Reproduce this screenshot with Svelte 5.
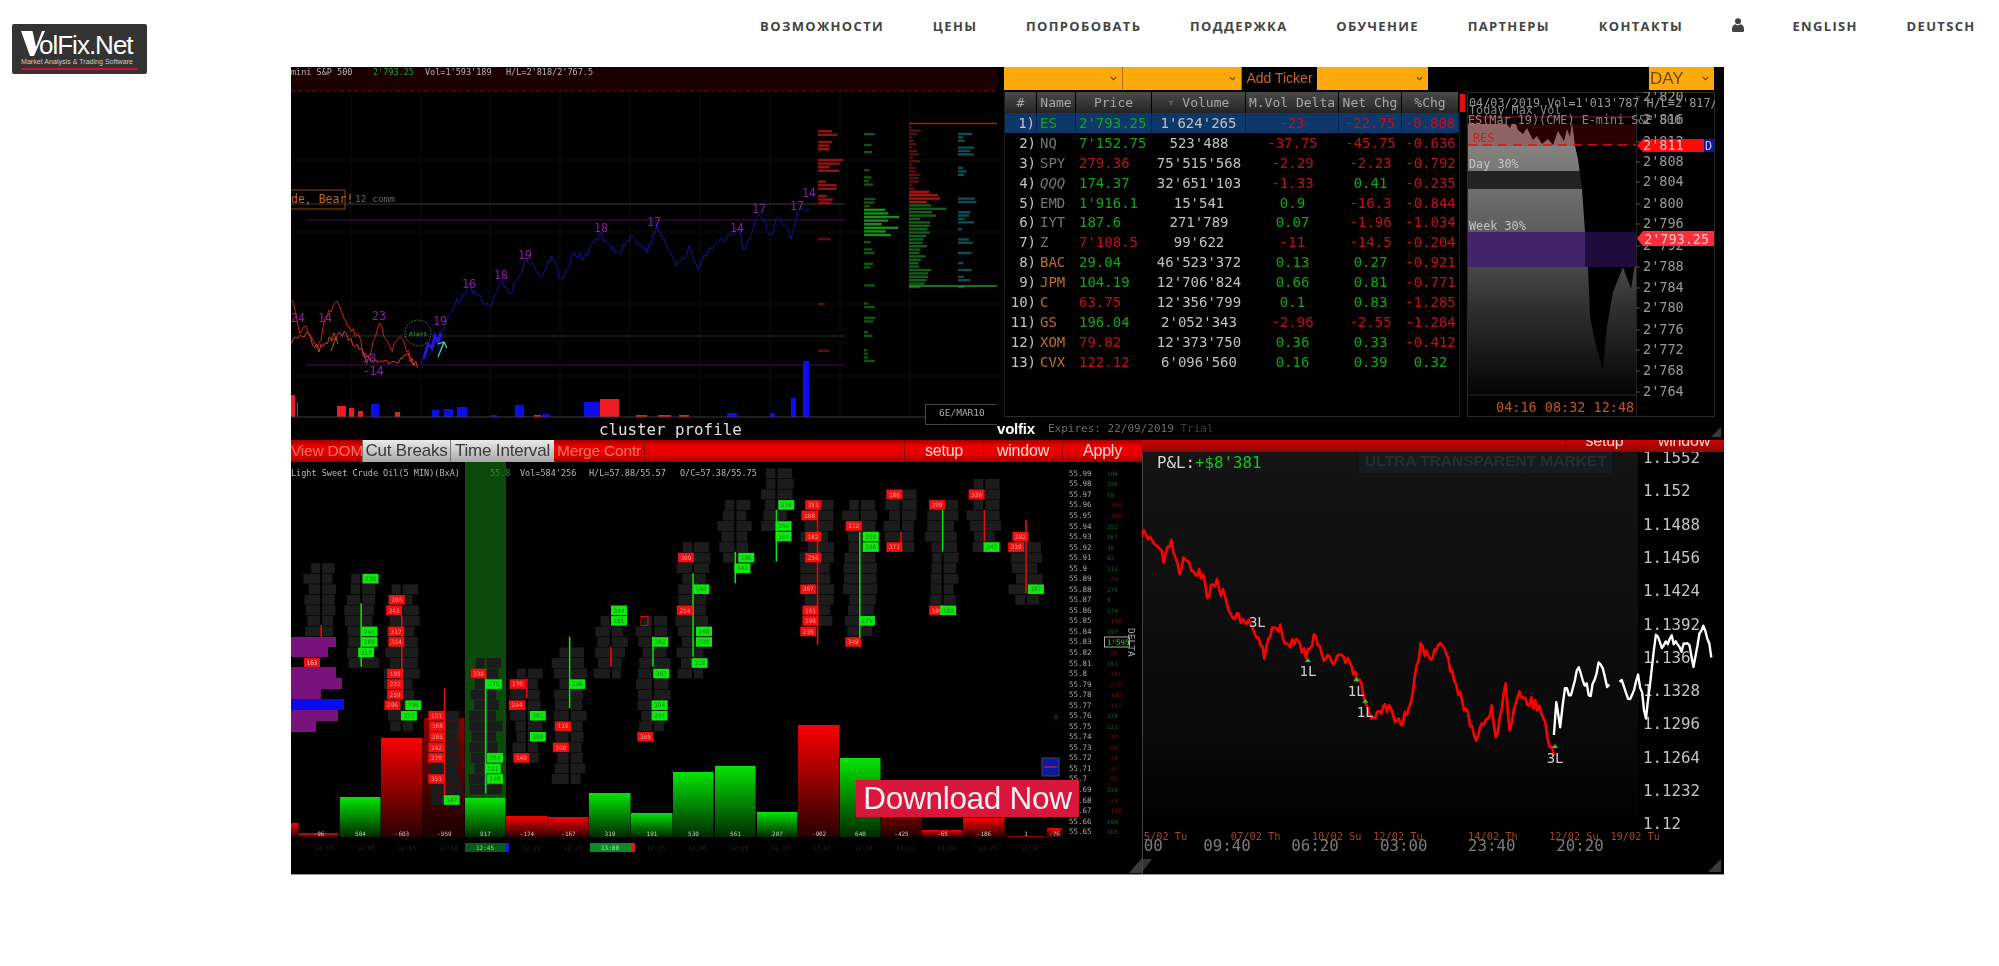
<script lang="ts">
  const navLinks = ["ВОЗМОЖНОСТИ", "ЦЕНЫ", "ПОПРОБОВАТЬ", "ПОДДЕРЖКА", "ОБУЧЕНИЕ", "ПАРТНЕРЫ", "КОНТАКТЫ"];

  // small seeded generator so the noisy chart parts stay the same on every load
  function seeded(seed: number) {
    let s = seed;
    return () => {
      s = (s * 16807) % 2147483647;
      return (s - 1) / 2147483646;
    };
  }

  function noisy(points: number[][], seed: number, amp: number) {
    const rnd = seeded(seed);
    let d = "";
    points.forEach((p, i) => {
      if (i === 0) {
        d += `M${p[0].toFixed(1)} ${p[1].toFixed(1)}`;
        return;
      }
      const prev = points[i - 1];
      const steps = Math.max(1, Math.round(Math.abs(p[0] - prev[0]) / 2));
      for (let k = 1; k <= steps; k++) {
        const t = k / steps;
        const x = prev[0] + (p[0] - prev[0]) * t;
        const y = prev[1] + (p[1] - prev[1]) * t + (rnd() - 0.5) * amp;
        d += `L${x.toFixed(1)} ${y.toFixed(1)}`;
      }
    });
    return d;
  }

  /* ---------- watchlist ---------- */
  const G = "g", R = "r", W = "w", O = "o", N = "n";
  const rows = [
    ["1)", "ES", G, "2'793.25", G, "1'624'265", "-23", R, "-22.75", R, "-0.808", R],
    ["2)", "NQ", N, "7'152.75", G, "523'488", "-37.75", R, "-45.75", R, "-0.636", R],
    ["3)", "SPY", N, "279.36", R, "75'515'568", "-2.29", R, "-2.23", R, "-0.792", R],
    ["4)", "QQQ", N, "174.37", G, "32'651'103", "-1.33", R, "0.41", G, "-0.235", R],
    ["5)", "EMD", N, "1'916.1", G, "15'541", "0.9", G, "-16.3", R, "-0.844", R],
    ["6)", "IYT", N, "187.6", G, "271'789", "0.07", G, "-1.96", R, "-1.034", R],
    ["7)", "Z", N, "7'108.5", R, "99'622", "-11", R, "-14.5", R, "-0.204", R],
    ["8)", "BAC", O, "29.04", G, "46'523'372", "0.13", G, "0.27", G, "-0.921", R],
    ["9)", "JPM", O, "104.19", G, "12'706'824", "0.66", G, "0.81", G, "-0.771", R],
    ["10)", "C", O, "63.75", R, "12'356'799", "0.1", G, "0.83", G, "-1.285", R],
    ["11)", "GS", O, "196.04", G, "2'052'343", "-2.96", R, "-2.55", R, "-1.284", R],
    ["12)", "XOM", O, "79.82", R, "12'373'750", "0.36", G, "0.33", G, "-0.412", R],
    ["13)", "CVX", O, "122.12", R, "6'096'560", "0.16", G, "0.39", G, "0.32", G],
  ];

  const miniAxis = [
    ["2'820", 98], ["2'816", 121], ["2'812", 143], ["2'808", 163], ["2'804", 183], ["2'800", 205],
    ["2'796", 225], ["2'792", 247], ["2'788", 268], ["2'784", 289], ["2'780", 309], ["2'776", 331],
    ["2'772", 351], ["2'768", 372], ["2'764", 393],
  ];

  /* ---------- top left chart, numbers read off the crops ---------- */
  const tx = (z: number) => z / 1.568;
  const ty = (z: number) => z / 3;
  const toTop = (pts: number[][]) => pts.map((p) => [tx(p[0]), ty(p[1])]);
  const blueLine = toTop([
    [660,1095],[690,1000],[710,920],[735,860],[750,890],[770,920],[785,840],[800,880],[825,780],[850,825],
    [865,770],[880,835],[900,760],[915,775],[940,700],[970,760],[990,705],[1015,755],[1030,680],[1060,800],
    [1080,750],[1095,800],[1110,750],[1130,725],[1160,690],[1165,760],[1190,640],[1210,710],[1220,640],
    [1240,710],[1250,640],[1270,620],
  ]);
  const redLine = toTop([
    [457,900],[470,1000],[480,990],[500,1040],[510,960],[528,895],[545,990],[560,1000],[575,1090],[595,965],
    [615,1060],[625,1000],[650,1095],
  ]);
  const redLine2 = toTop([
    [457,1030],[480,1000],[500,1050],[520,1010],[540,1000],[560,1040],[580,1080],[610,1090],[640,1070],[655,1100],
  ]);
  const purpleLabels = [
    ["16",469,288],["18",501,279],["19",525,259],["18",601,232],["17",654,226],["14",737,232],["17",759,213],
    ["17",797,210],["14",809,197],["19",440,325],["23",379,320],["14",325,322],["24",298,322],["-14",373,375],["18",369,362],
  ];
  const topBars = [
    [291,295,395,R],[297,298,402,R],[337,346,406,R],[349,354,408,R],[358,363,411,R],[371,379,404,"b"],[395,400,412,R],
    [432,439,410,"b"],[444,453,409,"b"],[457,467,407,"b"],[491,497,415,"b"],[515,524,405,"b"],[534,541,415,R],[542,550,414,"b"],
    [584,600,402,"b"],[600,619,399,R],[636,647,415,R],[658,671,415,R],[679,689,415,R],[727,737,413,"b"],[770,775,413,"b"],
    [791,796,398,"b"],[803,809,361,"b"],
  ];

  const rp = seeded(71);
  const profile: { x: number; y: number; w: number; c: string }[] = [];
  for (let y = 130; y < 360; y += 3.6) {
    const busy = y < 172 || (y > 175 && y < 205);
    if (rp() < (busy ? 0.75 : 0.18)) profile.push({ x: 818, y, w: 6 + rp() * (busy ? 24 : 8), c: busy ? "#8e1414" : "#5e0e0e" });
  }
  for (let y = 133; y < 368; y += 3.6) {
    const busy = y > 205 && y < 235;
    if (busy || rp() < 0.42) profile.push({ x: 864, y, w: busy ? 15 + rp() * 26 : 3 + rp() * 9, c: busy ? "#1c8a1c" : "#105510" });
  }
  for (let y = 126; y < 286; y += 3.4) {
    const red = y < 204;
    const peak = y > 188 && y < 204;
    const near = y > 204 && y < 216;
    profile.push({
      x: 909,
      y,
      w: peak ? 14 + rp() * 24 : near ? 18 + rp() * 22 : red ? 2 + rp() * 10 : 8 + rp() * 14,
      c: red ? (peak ? "#a01414" : "#5a0e0e") : "#145c18",
    });
    if (rp() < 0.55) profile.push({ x: 958, y, w: 3 + rp() * (y > 188 && y < 204 ? 32 : 14), c: "#0f4d52" });
  }

  /* ---------- bottom left chart ---------- */
  const bx = (z: number) => 280 + z / 1.823;
  const by = (z: number) => 430 + z / 3;
  const rowY = (r: number) => 473.3 + r * 10.54;

  const volume = [
    [291,299,823,R,""],[299,339,833,R,"-96"],[340,381,797,G,"504"],[381,423,738,R,"-603"],[424,465,718,"d","-959"],
    [465,506,798,G,"917"],[506,548,816,R,"-174"],[548,589,817,R,"-167"],[589,631,793,G,"319"],[631,673,813,G,"191"],
    [673,714,772,G,"530"],[715,756,766,G,"561"],[757,798,812,G,"207"],[798,840,725,R,"-902"],[840,881,758,G,"640"],
    [881,922,810,"d","-425"],[922,963,830,R,"-65"],[963,1005,818,R,"-186"],[1006,1046,836,R,"1"],[1047,1062,828,R,"-76"],
  ];

  const ladder: string[] = [];
  for (let i = 0; i <= 34; i++) {
    const v = (55.99 - i * 0.01).toFixed(2).replace(/0$/, "");
    ladder.push(v);
  }
  const rl = seeded(19);
  const ladderVals = ladder.map((_, i) => {
    const up = i < 17 ? rl() < 0.8 : rl() < 0.2;
    return { text: (up ? "" : "-") + Math.floor(rl() * 400 + 5), up };
  });

  const histogram = [
    [637,647,336,"#7a127e"],[647,657,328,"#7a127e"],[667,678,336,"#7a127e"],[678,689,342,"#7a127e"],
    [689,699,321,"#7a127e"],[699,710,344,"#0a0aee"],[710,721,338,"#7a127e"],[721,732,316,"#7a127e"],
  ];

  // column centre (crop x), gray rows, line [colour, from, to], cells [crop x, row, colour]
  const clusters: any[] = [
    { c: 75, rows: [9, 15], line: [R, 585, 620], cells: [] },
    { c: 148, rows: [10, 18], line: [G, 520, 710], cells: [[165,10,G],[163,15,G],[163,16,G],[157,17,G]] },
    { c: 222, rows: [11, 24], line: [R, 555, 810], cells: [[213,12,R],[208,13,R],[212,15,R],[212,16,R],[210,19,R],[210,20,R],[210,21,R],[205,22,R],[243,22,G],[235,23,G]] },
    { c: 300, rows: [23, 31], line: [R, 775, 1100], cells: [[285,23,R],[287,24,R],[287,25,R],[285,26,R],[285,27,R],[285,29,R],[313,31,G]] },
    { c: 375, rows: [18, 30], line: [G, 745, 1090], cells: [[362,19,R],[390,20,G],[392,27,G],[388,28,G],[392,29,G]] },
    { c: 450, rows: [19, 27], line: [R, 745, 805], cells: [[433,20,R],[432,22,R],[470,23,G],[470,25,G],[440,27,R]] },
    { c: 528, rows: [17, 29], line: [G, 620, 835], cells: [[542,20,G],[516,24,R],[512,26,R]] },
    { c: 603, rows: [14, 19], line: [R, 650, 710], cells: [[618,13,G],[618,14,G]] },
    { c: 680, rows: [14, 24], line: [G, 620, 710], cells: [[693,16,G],[695,19,G],[692,22,G],[692,23,G],[666,25,R]] },
    { c: 753, rows: [7, 19], line: [G, 430, 680], cells: [[740,8,R],[738,13,R],[768,11,G],[773,15,G],[773,16,G],[765,18,G]] },
    { c: 830, rows: [3, 8], line: [G, 365, 460], cells: [[850,8,G],[843,9,G]] },
    { c: 905, rows: [0, 5], line: [G, 240, 395], cells: [[923,3,G],[918,5,G],[918,6,G]] },
    { c: 980, rows: [3, 14], line: [R, 210, 645], cells: [[972,3,R],[965,4,R],[972,6,R],[972,8,R],[963,11,R],[967,13,R],[967,14,R],[963,15,R]] },
    { c: 1057, rows: [3, 15], line: [G, 305, 650], cells: [[1046,5,R],[1077,6,G],[1077,7,G],[1070,14,G],[1045,16,R]] },
    { c: 1132, rows: [2, 7], line: [R, 305, 350], cells: [[1120,2,R],[1120,7,R]] },
    { c: 1208, rows: [3, 12], line: [G, 240, 365], cells: [[1198,3,R],[1198,13,R],[1218,13,G]] },
    { c: 1284, rows: [1, 7], line: [R, 240, 335], cells: [[1270,2,R],[1297,7,G]] },
    { c: 1360, rows: [7, 12], line: [R, 270, 490], cells: [[1350,6,R],[1342,7,R],[1378,11,G]] },
  ];

  const grayCells = clusters.flatMap((col) => {
    const out = [];
    const rc = seeded(Math.round(col.c) * 7 + 3);
    for (let r = col.rows[0]; r <= col.rows[1]; r++) {
      const xc = bx(col.c);
      const wl = 9 + rc() * 8;
      const wr = 9 + rc() * 8;
      out.push({ x: xc - wl - 1, y: rowY(r) - 5, w: wl });
      out.push({ x: xc + 1, y: rowY(r) - 5, w: wr });
    }
    return out;
  });

  const timeLabels = ["11:55","12:00","12:05","12:10","12:15","12:20","12:25","12:30","12:35","12:40","12:50","12:55","13:05","13:10","13:15","13:20","13:25","13:30"];

  /* ---------- bottom right chart ---------- */
  const rx = (z: number) => 1130 + z / 2.529;
  const ry = (z: number) => 430 + z / 3;
  const toRight = (pts: number[][]) => pts.map((p) => [rx(p[0]), ry(p[1])]);

  const pnlRed = toRight([
    [30,320],[50,310],[75,345],[85,390],[105,340],[125,425],[135,395],[160,420],[185,440],[195,495],[215,455],[235,490],
    [255,545],[285,570],[310,580],[340,680],[365,580],[380,600],[395,645],[430,640],[445,680],[470,610],[490,690],[550,690],
    [580,750],[590,790],[610,865],[650,830],[685,890],[715,790],[735,650],[755,685],[790,650],[830,780],[875,920],[915,830],
    [925,935],[950,770],[960,890],[985,790],[1040,840],[1072,990],
  ]);
  const pnlWhite1 = toRight([[1072,915],[1078,830],[1088,890],[1100,780],[1115,800],[1135,710],[1165,800],[1185,690],[1212,775]]);
  const pnlWhite2 = toRight([
    [1238,755],[1265,805],[1285,725],[1305,870],[1330,615],[1345,660],[1370,625],[1395,670],[1410,625],[1425,700],[1450,575],[1470,680],
  ]);
  const tradeMarks = [
    ["3L",322,590,null],["1L",450,738,690],["1L",572,798,748],["1L",595,862,812],["3L",1075,998,948],
  ];
  const pnlAxis = ["1.1552","1.152","1.1488","1.1456","1.1424","1.1392","1.136","1.1328","1.1296","1.1264","1.1232","1.12"];
  const pnlDates = [["5/02 Tu",35],["07/02 Th",255],["10/02 Su",460],["12/02 Tu",615],["14/02 Th",855],["12/02 Su",1060],["19/02 Tu",1215]];
  const pnlTimes = [["00",35],["09:40",185],["06:20",408],["03:00",632],["23:40",855],["20:20",1078]];
</script>

<div class="page">
  <header class="site-header">
    <a class="logo" href="#top" aria-label="VolFix.Net">
      <span class="logo-name">
        <svg class="logo-v" viewBox="0 0 24 25" aria-hidden="true">
          <path fill-rule="evenodd" d="M0 0h24L13 25H9zM11.500 0l3.500 16L21 0z" fill="#fff" />
        </svg>
        <span>olFix.Net</span>
      </span>
      <span class="logo-sub">Market Analysis &amp; Trading Software</span>
      <span class="logo-rule"></span>
    </a>
    <nav class="site-nav">
      {#each navLinks as link}
        <a href="#top">{link}</a>
      {/each}
      <a href="#top" aria-label="Account">
        <svg class="user" viewBox="0 0 12 14" aria-hidden="true">
          <circle cx="6" cy="3.2" r="3" fill="#444" />
          <path d="M3.4 6.3C1.2 6.8 0 8.6 0 11v1.4c0 .9.7 1.6 1.6 1.6h8.8c.9 0 1.6-.7 1.6-1.6V11c0-2.4-1.2-4.2-3.4-4.7C7.900 7 7 7.300 6 7.300S4.100 7 3.400 6.300z" fill="#444" />
        </svg>
      </a>
      <a href="#top">ENGLISH</a>
      <a href="#top">DEUTSCH</a>
    </nav>
  </header>

  <main class="hero">
    <section class="top-row">
      <div class="cluster-panel">
        <svg class="fill" viewBox="291 67 706 373" aria-label="cluster profile chart">
          <rect x="291" y="67" width="706" height="24" fill="#1c0000" />
          <line x1="291" y1="91" x2="997" y2="91" stroke="#7a1010" stroke-dasharray="4 3" />
          <text class="t8" x="291" y="75" fill="#b5b5b5">mini S&amp;P 500</text>
          <text class="t8" x="373" y="75" fill="#1aa51a">2'793.25</text>
          <text class="t8" x="425" y="75" fill="#b5b5b5">Vol=1'593'189</text>
          <text class="t8" x="506" y="75" fill="#b5b5b5">H/L=2'818/2'767.5</text>

          {#each [351, 421, 490, 560, 630, 700, 770, 840, 910] as gx}
            <line x1={gx} y1="92" x2={gx} y2="417" stroke="#0e0e0e" />
          {/each}
          {#each [160, 232, 304, 376] as gy}
            <line x1="291" y1={gy} x2="997" y2={gy} stroke="#0e0e0e" />
          {/each}

          <line x1="291" y1="204" x2="845" y2="204" stroke="#3a3a3a" />
          <line x1="306" y1="220" x2="845" y2="220" stroke="#3c1060" />
          <line x1="340" y1="336" x2="845" y2="336" stroke="#555" stroke-dasharray="1 1" />
          <line x1="306" y1="365" x2="845" y2="365" stroke="#3c1060" />

          <rect x="280" y="190" width="65" height="19" fill="none" stroke="#8a4a12" />
          <text class="t11" x="291" y="203" fill="#c4651a">de, Bear!</text>
          <text class="t9" x="355" y="202" fill="#666">12 comm</text>

          {#each profile as p}
            <rect x={p.x} y={p.y} width={p.w} height="2.4" fill={p.c} />
          {/each}
          <line x1="909" y1="123.500" x2="997" y2="123.500" stroke="#b01818" stroke-width="1.500" />
          <line x1="909" y1="286" x2="997" y2="286" stroke="#1c9a1c" stroke-width="1.500" />

          <path d={noisy(redLine, 23, 9)} fill="none" stroke="#d01e1e" />
          <path d={noisy(redLine2, 31, 8)} fill="none" stroke="#e03a1a" />
          <path d={noisy(blueLine, 13, 8)} fill="none" stroke="#1414a0" />
          <path d="M424 358l4-14 4 4 3-12 3 6 3-9" fill="none" stroke="#1c1cd8" stroke-width="3" />
          {#each purpleLabels as l}
            <text class="t11" x={l[1]} y={l[2]} fill="#8a1fa8" text-anchor="middle">{l[0]}</text>
          {/each}

          <ellipse cx="418" cy="333" rx="13" ry="13" fill="none" stroke="#777" stroke-dasharray="1.500 1.500" />
          <text class="t6" x="418" y="336" fill="#2ac82a" text-anchor="middle">Alert</text>
          <path d="M438 357l6-15M438 344l6-2 3 6" fill="none" stroke="#3ad8c8" stroke-width="1.300" />
          <path d="M331 351l5-13M331 341l5-3 2 6" fill="none" stroke="#b35a1a" />

          {#each topBars as b}
            <rect x={b[0]} y={b[2]} width={+b[1] - +b[0]} height={417 - +b[2]} fill={b[3] === R ? "#f01c24" : "#0c0cf0"} />
          {/each}
          <line x1="291" y1="417" x2="997" y2="417" stroke="#3c3c3c" />
          <rect x="925.500" y="404.500" width="80" height="20" fill="#000" stroke="#444" />
          <text class="t9" x="939" y="416" fill="#aaa">6E/MAR10</text>
          <text class="t16" x="599" y="435" fill="#e0e0e0">cluster profile</text>
        </svg>
      </div>

      <div class="watch-panel">
        <div class="selectors">
          <div class="select wide">
            <svg class="chev" viewBox="0 0 8 5" aria-hidden="true"><path d="M1 1l3 3 3-3" /></svg>
          </div>
          <div class="select wide">
            <svg class="chev" viewBox="0 0 8 5" aria-hidden="true"><path d="M1 1l3 3 3-3" /></svg>
          </div>
          <span class="add-ticker">Add Ticker</span>
          <div class="select mid">
            <svg class="chev" viewBox="0 0 8 5" aria-hidden="true"><path d="M1 1l3 3 3-3" /></svg>
          </div>
          <div class="select day">
            <span>DAY</span>
            <svg class="chev" viewBox="0 0 8 5" aria-hidden="true"><path d="M1 1l3 3 3-3" /></svg>
          </div>
        </div>

        <div class="watch-body">
          <div class="table">
            <div class="row head">
              <span>#</span>
              <span>Name</span>
              <span>Price</span>
              <span class="vol-head"><i>▿</i>Volume</span>
              <span>M.Vol Delta</span>
              <span>Net Chg</span>
              <span>%Chg</span>
            </div>
            {#each rows as r, i}
              <div class="row" class:selected={i === 0}>
                <span class="num">{r[0]}</span>
                <span class="name {r[2]}" class:italic={r[1] === "QQQ"}>{r[1]}</span>
                <span class="price {r[4]}">{r[3]}</span>
                <span class="w">{r[5]}</span>
                <span class={r[7]}>{r[6]}</span>
                <span class={r[9]}>{r[8]}</span>
                <span class={r[11]}>{r[10]}</span>
              </div>
            {/each}
          </div>
          <div class="marker"></div>
          <svg class="mini" viewBox="1467 93 248 325" aria-label="price and volume profile">
            <defs>
              <linearGradient id="miniFade" x1="0" y1="0" x2="0" y2="1">
                <stop offset="0" stop-color="#8c8c8c" />
                <stop offset="0.4" stop-color="#5c5c5c" />
                <stop offset="0.7" stop-color="#2c2c2c" />
                <stop offset="1" stop-color="#040404" />
              </linearGradient>
            </defs>
            <rect x="1467.500" y="93.500" width="247" height="324" fill="#000" stroke="#2a2a2a" />
            <rect x="1468" y="125" width="168" height="271" fill="url(#miniFade)" />
            <rect x="1468" y="125" width="107" height="22" fill="#8f6464" />
            <path d="M1468 125h168v22h-61l-3-24-2 15-3-8-3 12-6-10-5 14-5-6-6 5-5-8-4 4-6-12-4 6-5-4-4-12-4 10-5-6-7-2-4-4-8 1-8-4z" fill="#2b0000" />
            <rect x="1575" y="125" width="61" height="22" fill="#2b0000" />
            <rect x="1468" y="172" width="168" height="18" fill="#232323" />
            <path d="M1575 147L1578 160 1582 190 1585 233 1588 268 1590 317 1595 343 1603 370 1607 327 1613 293 1623 268 1631 290 1636 258V147z" fill="#000" />
            <rect x="1468" y="233" width="117" height="35" fill="#42246b" />
            <rect x="1585" y="233" width="51" height="35" fill="#1f0b3c" />
            <line x1="1468" y1="146" x2="1636" y2="146" stroke="#e01010" stroke-width="1.500" stroke-dasharray="9 6" />
            <line x1="1468" y1="118" x2="1636" y2="118" stroke="#a01616" />
            <line x1="1468" y1="396" x2="1636" y2="396" stroke="#2c2c2c" />
            <line x1="1636.500" y1="93" x2="1636.500" y2="417" stroke="#222" />

            <text class="t12" x="1469" y="108" fill="#999">04/03/2019 Vol=1'013'787 H/L=2'817/2'76</text>
            <text class="t12" x="1469" y="115" fill="#888">Today Max Vol</text>
            <text class="t12" x="1468" y="125" fill="#888">ES(Mar 19)(CME) E-mini S&amp;P 500</text>
            <text class="t12" x="1473" y="143" fill="#c82020">RES</text>
            <text class="t12" x="1469" y="169" fill="#c4c4c4">Day 30%</text>
            <text class="t12" x="1469" y="231" fill="#c4c4c4">Week 30%</text>
            <text class="t13" x="1496" y="413" fill="#c4541a">04:16 08:32 12:48</text>

            {#each miniAxis as a}
              <text class="t13" x="1643" y={+a[1] + 4} fill="#999">{a[0]}</text>
              <line x1="1636" y1={a[1]} x2="1640" y2={a[1]} stroke="#555" />
            {/each}

            <path d="M1637 146.500l6-6.500h61v13h-61z" fill="#ff0a0a" />
            <rect x="1704" y="140" width="10" height="13" fill="#0c12b0" />
            <text class="t12" x="1705" y="151" fill="#c8c8e8">D</text>
            <text class="t13" x="1643" y="151" fill="#f0c0c0">2'811</text>
            <path d="M1637 239.500l6-7.500h71v15h-71z" fill="#ff2d3c" />
            <text class="t13" x="1644" y="245" fill="#ffc8c8">2'793.25</text>
          </svg>
        </div>

        <div class="status">
          <span class="brand">volfix</span>
          <span class="expires">Expires: 22/09/2019 <em>Trial</em></span>
          <svg class="grip" viewBox="0 0 13 13" aria-hidden="true"><path d="M13 0v13H0z" fill="#3a3a3a" /></svg>
        </div>
      </div>
    </section>

    <section class="bottom-row">
      <div class="dom-panel">
        <div class="toolbar">
          <button class="off">View DOM</button>
          <button class="on w-cut">Cut Breaks</button>
          <button class="on w-time">Time Interval</button>
          <button class="off w-merge">Merge Contr</button>
          <span class="grow"></span>
          <button class="act w-setup">setup</button>
          <button class="act w-window">window</button>
          <button class="act w-apply">Apply</button>
        </div>
        <svg class="fill" viewBox="291 462 851 412" aria-label="footprint chart">
          <defs>
            <linearGradient id="barRed" x1="0" y1="0" x2="0" y2="1">
              <stop offset="0" stop-color="#f80000" />
              <stop offset="1" stop-color="#2a0000" />
            </linearGradient>
            <linearGradient id="barGreen" x1="0" y1="0" x2="0" y2="1">
              <stop offset="0" stop-color="#04e404" />
              <stop offset="1" stop-color="#012a01" />
            </linearGradient>
            <linearGradient id="barDim" x1="0" y1="0" x2="0" y2="1">
              <stop offset="0" stop-color="#8a0000" />
              <stop offset="1" stop-color="#1c0000" />
            </linearGradient>
          </defs>
          <rect x="465" y="462" width="41" height="336" fill="#0b4a0b" />

          <text class="t8" x="291" y="476" fill="#b8b8b8">Light Sweet Crude Oil(5 MIN)(BxA)</text>
          <text class="t8" x="490" y="476" fill="#1a9a1a">55.8</text>
          <text class="t8" x="520" y="476" fill="#b8b8b8">Vol=584'256</text>
          <text class="t8" x="589" y="476" fill="#b8b8b8">H/L=57.88/55.57</text>
          <text class="t8" x="680" y="476" fill="#b8b8b8">O/C=57.38/55.75</text>

          {#each volume as b}
            <rect
              x={b[0]}
              y={b[2]}
              width={+b[1] - +b[0] - 0.5}
              height={837 - +b[2]}
              fill={b[3] === G ? "url(#barGreen)" : b[3] === R ? "url(#barRed)" : "url(#barDim)"}
            />
          {/each}
          {#each volume as b}
            <text class="t6" x={(+b[0] + +b[1]) / 2} y="836" fill="#c8c8c8" text-anchor="middle">{b[4]}</text>
          {/each}

          {#each histogram as h}
            <rect x="291" y={h[0]} width={+h[2] - 291} height={+h[1] - +h[0]} fill={h[3]} />
          {/each}

          {#each grayCells as g}
            <rect x={g.x} y={g.y} width={g.w} height="10" fill="#1c1c1c" />
          {/each}
          <rect x="304" y="658" width="16" height="9" fill="#ee1010" />
          <text class="t6" x="312" y="665" fill="#ffd0d0" text-anchor="middle">163</text>

          {#each clusters as col}
            <line
              x1={bx(col.c)}
              y1={by(col.line[1])}
              x2={bx(col.c)}
              y2={by(col.line[2])}
              stroke={col.line[0] === G ? "#10e010" : "#ea1010"}
              stroke-width="1.600"
            />
            {#each col.cells as cell}
              <rect
                x={bx(cell[0]) - 8}
                y={rowY(cell[1]) - 4.8}
                width="16"
                height="9.600"
                fill={cell[2] === G ? "#0ee80e" : "#f01010"}
              />
              <text class="t6" x={bx(cell[0])} y={rowY(cell[1]) + 2.2} fill={cell[2] === G ? "#0a8a0a" : "#ff9a9a"} text-anchor="middle">{100 + ((cell[1] * 37 + col.c) % 280)}</text>
            {/each}
          {/each}
          <rect x="641" y="616.500" width="7" height="9" fill="none" stroke="#d01010" />

          {#each ladder as price, i}
            <text class="t7" x="1069" y={rowY(i) + 2.500} fill="#a8a8a8">{price}</text>
            <text class="t6" x="1107" y={rowY(i) + 2.500} fill={ladderVals[i].up ? "#0d6a0d" : "#7a1010"}>{ladderVals[i].text}</text>
          {/each}
          <rect x="1104.500" y="637" width="25" height="10" fill="none" stroke="#aaa" />
          <text class="t7" x="1107" y="644.500" fill="#2ac82a">1'595</text>
          <text class="t9" transform="translate(1128 628) rotate(90)" fill="#aaa">DELTA</text>
          <rect x="1042" y="758" width="17" height="18" fill="#0a1aa0" stroke="#445" />
          <line x1="1044" y1="767" x2="1057" y2="767" stroke="#c01050" stroke-width="1.500" />
          <path d="M1053 717h6M1056 714v7" stroke="#333" fill="none" />

          {#each timeLabels as t, i}
            <text class="t6" x={315 + i * 41.500} y="850" fill="#262626">{t}</text>
          {/each}
          <rect x="465" y="843" width="41" height="9" fill="#0a5a1a" />
          <rect x="506" y="843" width="3" height="9" fill="#1a1ae0" />
          <text class="t6" x="476" y="850" fill="#8ad88a">12:45</text>
          <rect x="590" y="843" width="41" height="9" fill="#0c8a2a" />
          <rect x="631" y="843" width="4" height="9" fill="#e01a1a" />
          <text class="t6" x="601" y="850" fill="#a8e8a8">13:00</text>
          <path d="M1142 858v15h-13z" fill="#3a3a3a" />
        </svg>
        <a class="download" href="#top">Download Now</a>
      </div>

      <div class="pnl-panel">
        <div class="toolbar clip">
          <span class="grow"></span>
          <button class="act w-setup2">setup</button>
          <button class="act w-window2">window</button>
        </div>
        <svg class="fill" viewBox="1142 452 582 422" aria-label="profit and loss chart">
          <defs>
            <linearGradient id="pnlFade" x1="0" y1="0" x2="0" y2="1">
              <stop offset="0" stop-color="#141414" />
              <stop offset="0.75" stop-color="#090909" />
              <stop offset="1" stop-color="#000" />
            </linearGradient>
          </defs>
          <rect x="1143" y="452" width="495" height="380" fill="url(#pnlFade)" />
          <line x1="1142.500" y1="452" x2="1142.500" y2="874" stroke="#444" />
          <rect x="1359" y="452" width="253" height="21" fill="#161b20" />
          <text class="ultra" x="1365" y="466">ULTRA TRANSPARENT MARKET</text>

          <text class="t16" x="1157" y="468" fill="#d8d8d8">P&amp;L:</text>
          <text class="t16" x="1195" y="468" fill="#12c812">+$8'381</text>

          {#each pnlAxis as label, i}
            <text class="t16" x="1643" y={463 + i * 33.300} fill="#c4c4c4">{label}</text>
          {/each}

          <path d={noisy(pnlRed, 41, 11)} fill="none" stroke="#ff0000" stroke-width="2.600" stroke-linejoin="round" />
          <path d={noisy(pnlWhite1, 55, 9)} fill="none" stroke="#fff" stroke-width="2.400" stroke-linejoin="round" />
          <path d={noisy(pnlWhite2, 63, 10)} fill="none" stroke="#fff" stroke-width="2.400" stroke-linejoin="round" />

          {#each tradeMarks as m}
            <text class="t14" x={rx(+m[1])} y={ry(+m[2])} fill="#cfcfcf" text-anchor="middle">{m[0]}</text>
            {#if m[3]}
              <path d="M{rx(+m[1]) - 3} {ry(+m[3]) + 2}l3-4 3 4z" fill="#22d022" />
            {/if}
          {/each}

          {#each pnlDates as d}
            <text class="t10" x={rx(+d[1])} y="840" fill="#a3481a">{d[0]}</text>
          {/each}
          {#each pnlTimes as t}
            <text class="t16" x={rx(+t[1])} y="851" fill="#7c7c7c">{t[0]}</text>
          {/each}
          <path d="M1143 871v-12l9 0z" fill="#333" />
          <path d="M1721 859v13h-13z" fill="#3a3a3a" />
        </svg>
      </div>
    </section>
  </main>
</div>

<style>
  :global(body) {
    margin: 0;
    background: #fff;
  }

  .page {
    min-height: 966px;
    font-family: "Open Sans", "Liberation Sans", sans-serif;
  }

  /* header */
  .site-header {
    display: flex;
    justify-content: space-between;
    align-items: flex-start;
    height: 67px;
    padding: 0 0 0 12px;
  }

  .logo {
    display: block;
    width: 135px;
    height: 50px;
    margin-top: 24px;
    box-sizing: border-box;
    padding: 7px 0 0 9px;
    background: #333;
    border-radius: 2px;
    color: #fff;
    text-decoration: none;
    font-family: "Liberation Sans", sans-serif;
  }

  .logo-name {
    display: flex;
    align-items: flex-end;
    height: 25px;
    font-size: 26px;
    line-height: 22px;
    letter-spacing: -1px;
  }

  .logo-v {
    width: 24px;
    height: 25px;
    margin-right: -6px;
    flex: none;
  }

  .logo-sub {
    display: block;
    font-size: 7.100px;
    line-height: 9px;
    margin-top: 2px;
    color: #ccc;
    white-space: nowrap;
  }

  .logo-rule {
    display: block;
    width: 116px;
    height: 2px;
    margin: 1px 0 0 0;
    background: #d4103a;
  }

  .site-nav {
    display: flex;
    align-items: center;
    height: 52px;
    margin-right: -1px;
  }

  .site-nav a {
    display: block;
    padding: 0 24.350px;
    font-size: 13px;
    font-weight: 700;
    letter-spacing: 1.350px;
    color: #444;
    text-decoration: none;
    white-space: nowrap;
  }

  .user {
    display: block;
    width: 12px;
    height: 14px;
    margin-top: -3px;
  }

  /* screenshot block */
  .hero {
    width: 1433px;
    height: 807px;
    margin-left: 291px;
    background: #000;
    border-bottom: 1px solid #999;
    filter: blur(0.5px);
    overflow: hidden;
  }

  .top-row {
    display: flex;
    height: 373px;
  }

  .bottom-row {
    display: flex;
    height: 434px;
  }

  .cluster-panel {
    width: 706px;
    flex: none;
  }

  .fill {
    display: block;
    width: 100%;
  }

  .cluster-panel .fill {
    height: 373px;
  }

  .dom-panel .fill {
    height: 412px;
  }

  .pnl-panel .fill {
    height: 422px;
  }

  svg text {
    font-family: "DejaVu Sans Mono", "Liberation Mono", monospace;
  }

  .t6 { font-size: 6px; }
  .t7 { font-size: 7.5px; }
  .t8 { font-size: 8.500px; }
  .t9 { font-size: 9.500px; }
  .t10 { font-size: 10.300px; }
  .t11 { font-size: 11.500px; }
  .t12 { font-size: 11.800px; }
  .t13 { font-size: 13.500px; }
  .t14 { font-size: 14px; }
  .t16 { font-size: 15.800px; }

  svg text.ultra {
    font-family: "Liberation Sans", sans-serif;
    font-size: 15.500px;
    font-weight: 700;
    fill: #2b2b2b;
  }

  /* watchlist */
  .watch-panel {
    width: 727px;
    flex: none;
    display: flex;
    flex-direction: column;
    font-family: "DejaVu Sans Mono", "Liberation Mono", monospace;
  }

  .selectors {
    display: flex;
    align-items: stretch;
    height: 23px;
    padding-left: 7px;
    margin-bottom: 2px;
  }

  .select {
    display: flex;
    align-items: center;
    justify-content: flex-end;
    box-sizing: border-box;
    padding-right: 5px;
    background: #fda90c;
  }

  .select.wide {
    width: 119px;
    border-right: 1px solid #a86f08;
  }

  .select.mid {
    width: 111px;
  }

  .select.day {
    width: 65px;
    margin-left: 221px;
    justify-content: space-between;
    padding-left: 1px;
    font-family: "Liberation Sans", sans-serif;
    font-size: 17px;
    color: #6c4c10;
  }

  .chev {
    width: 7px;
    height: 5px;
    fill: none;
    stroke: #5a3c08;
    stroke-width: 1.300;
  }

  .add-ticker {
    display: block;
    width: 75px;
    text-align: center;
    font-family: "Liberation Sans", sans-serif;
    font-size: 14px;
    line-height: 23px;
    color: #c9661f;
    white-space: nowrap;
  }

  .watch-body {
    display: flex;
    height: 325px;
    padding-left: 7px;
  }

  .table {
    width: 456px;
    flex: none;
    box-sizing: border-box;
    border-bottom: 1px solid #2a2a2a;
    border-left: 1px solid #1c1c1c;
    border-right: 1px solid #1c1c1c;
  }

  .row {
    display: grid;
    grid-template-columns: 32px 39px 76px 94px 93px 63px 57px;
    height: 19.900px;
    font-size: 14px;
    line-height: 20px;
    text-align: center;
    white-space: nowrap;
  }

  .row.head {
    height: 21px;
    font-size: 13px;
    line-height: 21px;
    color: #a8a8a8;
  }

  .row.head span {
    margin-right: 1px;
    background: linear-gradient(#4a4a4a, #242424);
  }

  .row.head .vol-head {
    display: flex;
    justify-content: center;
  }

  .vol-head i {
    margin-right: 8px;
    font-style: normal;
    font-size: 11px;
    color: #777;
  }

  .row.selected {
    background: #0e3869;
  }

  .row.selected span {
    border-right: 1px solid #08264a;
  }

  .num {
    text-align: right;
    color: #c4c4c4;
    padding-right: 1px;
  }

  .name {
    text-align: left;
    padding-left: 3px;
  }

  .price {
    text-align: left;
    padding-left: 3px;
  }

  .italic {
    font-style: italic;
  }

  .g { color: #10a810; }
  .r { color: #c21019; }
  .w { color: #c0c0c0; }
  .o { color: #c26a2c; }
  .n { color: #747474; }

  .marker {
    width: 5px;
    height: 18px;
    margin-top: 2px;
    margin-right: 2px;
    flex: none;
    background: #e80c0c;
  }

  .mini {
    display: block;
    width: 248px;
    height: 325px;
    flex: none;
  }

  .status {
    display: flex;
    align-items: center;
    height: 23px;
    position: relative;
  }

  .brand {
    font-family: "Liberation Sans", sans-serif;
    font-size: 15px;
    font-weight: 700;
    letter-spacing: -0.2px;
    color: #fff;
    width: 51px;
    flex: none;
  }

  .expires {
    font-size: 11px;
    color: #6a6a6a;
    white-space: nowrap;
  }

  .expires em {
    font-style: normal;
    color: #3e3e3e;
  }

  .grip {
    position: absolute;
    right: 3px;
    bottom: 3px;
    width: 10px;
    height: 10px;
  }

  /* lower panels */
  .dom-panel {
    position: relative;
    width: 851px;
    flex: none;
  }

  .pnl-panel {
    width: 582px;
    flex: none;
  }

  .toolbar {
    display: flex;
    height: 22px;
    background: linear-gradient(#a40000, #f00000 30%, #e00000 70%, #9a0000);
    overflow: hidden;
  }

  .toolbar.clip {
    height: 12px;
    align-items: flex-end;
    background: linear-gradient(#d00000, #8a0808);
  }

  .grow {
    flex: 1;
  }

  .toolbar button {
    appearance: none;
    margin: 0;
    padding: 0;
    border: 0;
    background: none;
    font-family: "Liberation Sans", sans-serif;
    font-size: 15.500px;
    letter-spacing: -0.2px;
    line-height: 22px;
    white-space: nowrap;
    overflow: hidden;
    flex: none;
  }

  .toolbar.clip button {
    height: 22px;
    flex: none;
  }

  .toolbar .off {
    width: 71px;
    color: #e8765e;
  }

  .toolbar .on {
    font-size: 17px;
    color: #3a3a3a;
    background: linear-gradient(#eaeaea, #a8a8a8);
    border-left: 1px solid #777;
  }

  .w-cut {
    width: 88px;
  }

  .w-time {
    width: 104px;
  }

  .toolbar .w-merge {
    width: 91px;
    border-right: 1px solid #8a0000;
  }

  .toolbar .act {
    font-size: 16px;
    color: #f8d8d0;
    border-left: 1px solid #8a0000;
  }

  .w-setup {
    width: 79px;
  }

  .w-window {
    width: 79px;
  }

  .w-apply {
    width: 80px;
  }

  .w-setup2 {
    width: 78px;
  }

  .w-window2 {
    width: 81px;
  }

  .download {
    position: absolute;
    left: 565px;
    top: 340px;
    width: 223px;
    height: 37px;
    background: #d9163c;
    color: #f0f0f0;
    font-family: "Liberation Sans", sans-serif;
    font-size: 31.500px;
    letter-spacing: -0.3px;
    line-height: 36px;
    text-align: center;
    text-decoration: none;
    white-space: nowrap;
  }
</style>
